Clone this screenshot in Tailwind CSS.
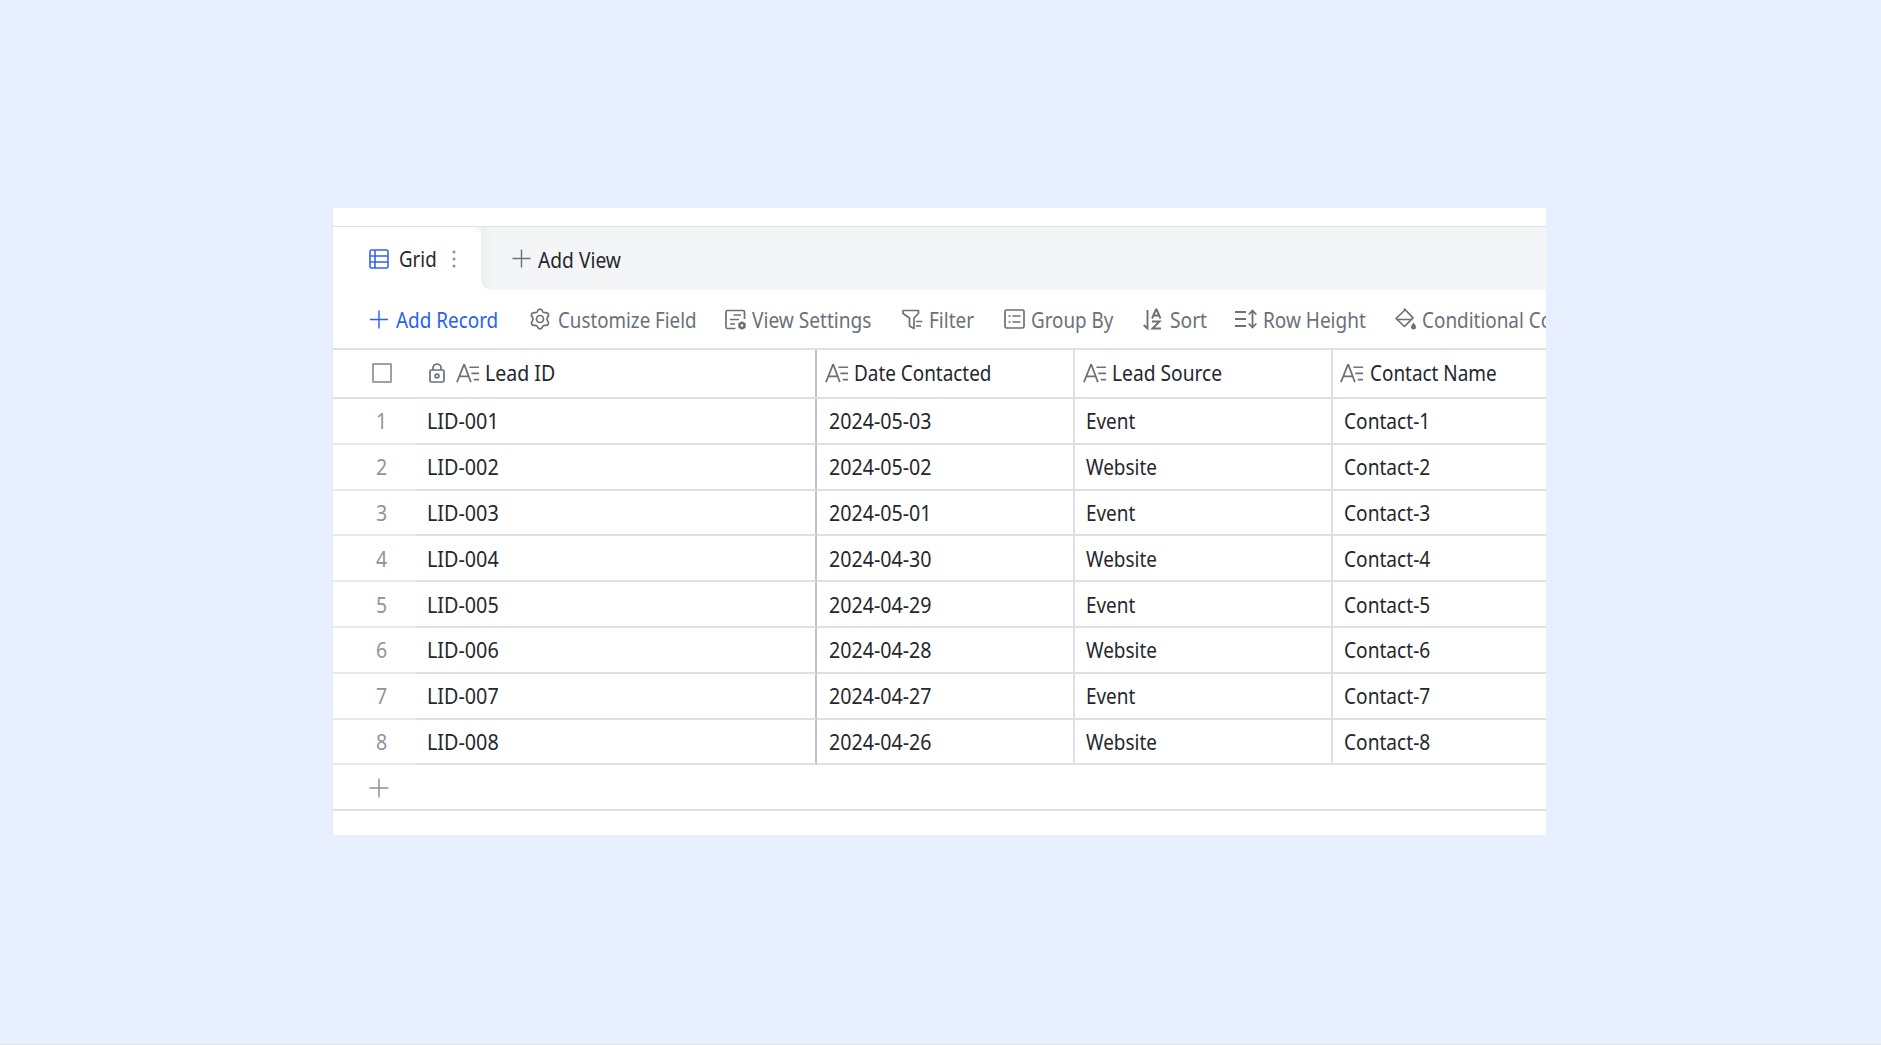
<!DOCTYPE html>
<html lang="en">
<head>
<meta charset="utf-8">
<title>Leads grid</title>
<script src="https://cdn.jsdelivr.net/npm/@tailwindcss/browser@4"></script>
</head>
<body class="h-screen overflow-hidden border-b border-[#dfe5ea] bg-[#e8efff] pt-[208px] pl-[332px] font-['Noto_Sans',sans-serif] text-[21px] leading-6 text-[#25272d] [&_span]:origin-left">
<svg class="hidden">
  <symbol id="plus" viewBox="0 0 20 20"><path d="M10 .5v19M.5 10h19" fill="none" stroke="currentColor" stroke-width="1.5"/></symbol>
  <symbol id="text-type" viewBox="0 0 24 20"><g fill="none" stroke="currentColor" stroke-width="1.8"><path d="M1 19.500 8.200 1.500h.6L15.500 19.500M3.500 13.500h10M14 4h10M16 10.500h8M18.500 17h5.500"/></g></symbol>
</svg>
<main class="h-[627px] w-[1214px] overflow-hidden border-l border-[#e3e7ee] bg-white">
  <div class="h-[18px]"></div>
  <nav class="flex h-[64px] border-t border-[#e0e2e5] bg-[#f4f5f7]">
    <div class="flex w-[148px] items-center rounded-tr-[10px] bg-white pl-[36px]">
      <svg class="h-5 w-5 text-[#3366f0]" viewBox="0 0 20 20" fill="none" stroke="currentColor" stroke-width="1.6"><rect x="1" y="1" width="18" height="18" rx="1.500"/><path d="M6 1v18M1 7h18M1 13h18"/></svg>
      <span class="ml-[10px] w-[37px] scale-x-[0.89] whitespace-nowrap">Grid</span>
      <svg class="ml-[16px] h-[18px] w-1 text-[#8f949f]" viewBox="0 0 4 18" fill="currentColor"><circle cx="2" cy="2" r="1.500"/><circle cx="2" cy="9" r="1.500"/><circle cx="2" cy="16" r="1.500"/></svg>
    </div>
    <div class="flex w-[12px] items-end bg-linear-to-r from-[#eceef0] to-[#f4f5f7]">
      <svg class="h-[10px] w-[10px]" viewBox="0 0 10 10"><path d="M0 0A10 10 0 0 0 10 10H0Z" fill="white"/></svg>
    </div>
    <div class="flex items-center pl-[19px]">
      <svg class="h-[19px] w-[19px] text-[#6b6f7a]"><use href="#plus"/></svg>
      <span class="ml-[7px] scale-x-[0.915] whitespace-nowrap pt-[2px]">Add View</span>
    </div>
  </nav>
  <div class="flex h-[58px] items-center whitespace-nowrap pl-[36px] text-[#6b7079] [&_span]:pt-[2px]">
    <div class="flex w-[160px] shrink-0 items-center text-[#2a5ff0]"><svg class="mr-[7px] h-[19px] w-[20px]"><use href="#plus"/></svg><span class="scale-x-[0.9]">Add Record</span></div>
    <div class="flex w-[196px] shrink-0 items-center"><svg class="mr-[7px] h-[22px] w-[22px]" viewBox="0 0 22 22" fill="none" stroke="currentColor" stroke-width="1.7" stroke-linejoin="round"><path d="M8.500 3.200Q9 1.200 11 1.200T13.500 3.200Q14.200 5 16.300 4.600 18.400 4.300 19.300 6T18.600 9.100Q17.300 11 18.600 12.900 20.200 14.400 19.300 16T16.300 17.400Q14.200 17 13.500 18.800 13 20.800 11 20.800T8.500 18.800Q7.800 17 5.700 17.400 3.600 17.700 2.700 16T3.400 12.900Q4.700 11 3.400 9.100 1.800 7.600 2.700 6T5.700 4.600Q7.800 5 8.500 3.200Z"/><circle cx="11" cy="11" r="3.500"/></svg><span class="scale-x-[0.892]">Customize Field</span></div>
    <div class="flex w-[177px] shrink-0 items-center"><svg class="mr-[6px] h-[21px] w-[21px]" viewBox="0 0 21 21" fill="none" stroke="currentColor" stroke-width="1.7"><path d="M10.500 19.500H2.500A1.500 1.500 0 0 1 1 18v-15A1.500 1.500 0 0 1 2.500 1.500H18A1.500 1.500 0 0 1 19.500 3V10M8.500 6h7.500M5 10.500h9M5 15h5"/><circle cx="17" cy="16.500" r="2.500" stroke-width="2.400"/><path d="M17 12.500v1.500M17 19v1.500M13.500 14.500l1.300.8M19.200 17.700l1.300.8M20.500 14.500l-1.300.8M14.800 17.700l-1.300.8"/></svg><span class="scale-x-[0.91]">View Settings</span></div>
    <div class="flex w-[102px] shrink-0 items-center"><svg class="mr-[6px] h-[21px] w-[21px]" viewBox="0 0 21 21" fill="none" stroke="currentColor" stroke-width="1.7" stroke-linejoin="round"><path d="M1 1.500h15.500v3L12 9V19.500L7.500 17V9L1 4.500ZM14 12.500h6.500M14 17h5"/></svg><span class="scale-x-[0.905]">Filter</span></div>
    <div class="flex w-[139px] shrink-0 items-center"><svg class="mr-[6px] h-[20px] w-[21px]" viewBox="0 0 21 20" fill="none" stroke="currentColor" stroke-width="1.7"><rect x="1" y="1" width="19" height="18" rx="1.500"/><path d="M4.500 7h2M8.500 7h8M4.500 13h2M8.500 13h8"/></svg><span class="scale-x-[0.895]">Group By</span></div>
    <div class="flex w-[92px] shrink-0 items-center"><svg class="mr-[8px] h-[22px] w-[19px]" viewBox="0 0 19 22" fill="none" stroke="currentColor" stroke-width="1.900"><path d="M4.500 2v18.500L.7 17M9 10.500l4-9h.6L17.500 10.500M10.500 7.500h5.500M9 13.500H16.500L9.500 20.500H18"/></svg><span class="scale-x-[0.915]">Sort</span></div>
    <div class="flex w-[160px] shrink-0 items-center"><svg class="mr-[6px] h-[20px] w-[22px]" viewBox="0 0 22 20" fill="none" stroke="currentColor" stroke-width="1.800"><path d="M0 3h11M0 10h11M0 17h11M17.500 1.500v17M13.700 5.500l3.800-4L21.300 5.500M13.700 14.500l3.800 4 3.800-4"/></svg><span class="scale-x-[0.905]">Row Height</span></div>
    <div class="flex shrink-0 items-center"><svg class="mr-[5px] h-[22px] w-[22px]" viewBox="0 0 22 22" fill="none" stroke="currentColor" stroke-width="1.700" stroke-linejoin="round"><path d="M9 .5 18 9.800 9.500 18.500 1 10.500 10 2M1.500 11.500h16"/><path d="M18.500 14.500c1 1.600 2.500 2.900 2.500 4.500a2.500 2.500 0 0 1-5 0c0-1.600 1.500-2.900 2.500-4.500Z" fill="currentColor" stroke="none"/></svg><span class="scale-x-[0.9]">Conditional Coloring</span></div>
  </div>
  <div id="table" class="whitespace-nowrap">
    <div class="flex h-[51px] border-t-2 border-b-2 border-[#dfe0e4] *:pb-px">
      <div class="flex w-[484px] shrink-0 items-center border-r-2 border-[#c0c3c9] pl-[39px]">
        <div class="h-5 w-5 rounded-[1px] border-2 border-[#9ca0a9]"></div>
        <svg class="ml-[37px] h-[20px] w-[16px] text-[#6b7079]" viewBox="0 0 16 20" fill="none" stroke="currentColor" stroke-width="1.700"><rect x="1" y="7" width="14" height="12" rx="1.500"/><path d="M4 7V5a4 4 0 0 1 8 0v2"/><circle cx="8" cy="13" r="1.900"/></svg>
        <svg class="mr-[6px] ml-[11px] h-5 w-[23px] text-[#6b7079]"><use href="#text-type"/></svg><span class="scale-x-[0.93]">Lead ID</span>
      </div>
      <div class="flex w-[258px] shrink-0 items-center border-r-2 border-[#dfe0e4] pl-[8px]"><svg class="mr-[6px] h-5 w-[23px] text-[#6b7079]"><use href="#text-type"/></svg><span class="scale-x-[0.9]">Date Contacted</span></div>
      <div class="flex w-[258px] shrink-0 items-center border-r-2 border-[#dfe0e4] pl-[8px]"><svg class="mr-[6px] h-5 w-[23px] text-[#6b7079]"><use href="#text-type"/></svg><span class="scale-x-[0.915]">Lead Source</span></div>
      <div class="flex shrink-0 items-center pl-[7px]"><svg class="mr-[7px] h-5 w-[23px] text-[#6b7079]"><use href="#text-type"/></svg><span class="scale-x-[0.9]">Contact Name</span></div>
    </div>
  </div>
  <div class="flex h-[46px] items-center border-b-2 border-[#dfe0e4] pt-[2px] pl-[36px]"><svg class="h-[20px] w-[20px] text-[#8c919c]"><use href="#plus"/></svg></div>
</main>
<script>
const dates = ['05-03','05-02','05-01','04-30','04-29','04-28','04-27','04-26'];
document.getElementById('table').insertAdjacentHTML('beforeend', dates.map((d, i) => `
<div class="flex h-[45.8px]">
  <div class="flex w-[83px] shrink-0 items-center justify-center border-b-2 border-[#e8e9eb] pt-px pl-[16px] text-[#9094a0]"><span class="scale-x-[0.93]">${i + 1}</span></div>
  <div class="flex w-[401px] shrink-0 items-center border-r-2 border-b-2 border-r-[#c0c3c9] border-b-[#dfe0e4] pt-px pl-[11px]"><span class="scale-x-[0.94]">LID-00${i + 1}</span></div>
  <div class="flex w-[258px] shrink-0 items-center border-r-2 border-b-2 border-[#dfe0e4] pt-px pl-[12px]"><span class="scale-x-[0.935]">2024-${d}</span></div>
  <div class="flex w-[258px] shrink-0 items-center border-r-2 border-b-2 border-[#dfe0e4] pt-px pl-[11px]"><span class="scale-x-[0.9]">${i % 2 ? 'Website' : 'Event'}</span></div>
  <div class="flex flex-1 items-center border-b-2 border-[#dfe0e4] pt-px pl-[11px]"><span class="scale-x-[0.91]">Contact-${i + 1}</span></div>
</div>`).join(''));
</script>
</body>
</html>
